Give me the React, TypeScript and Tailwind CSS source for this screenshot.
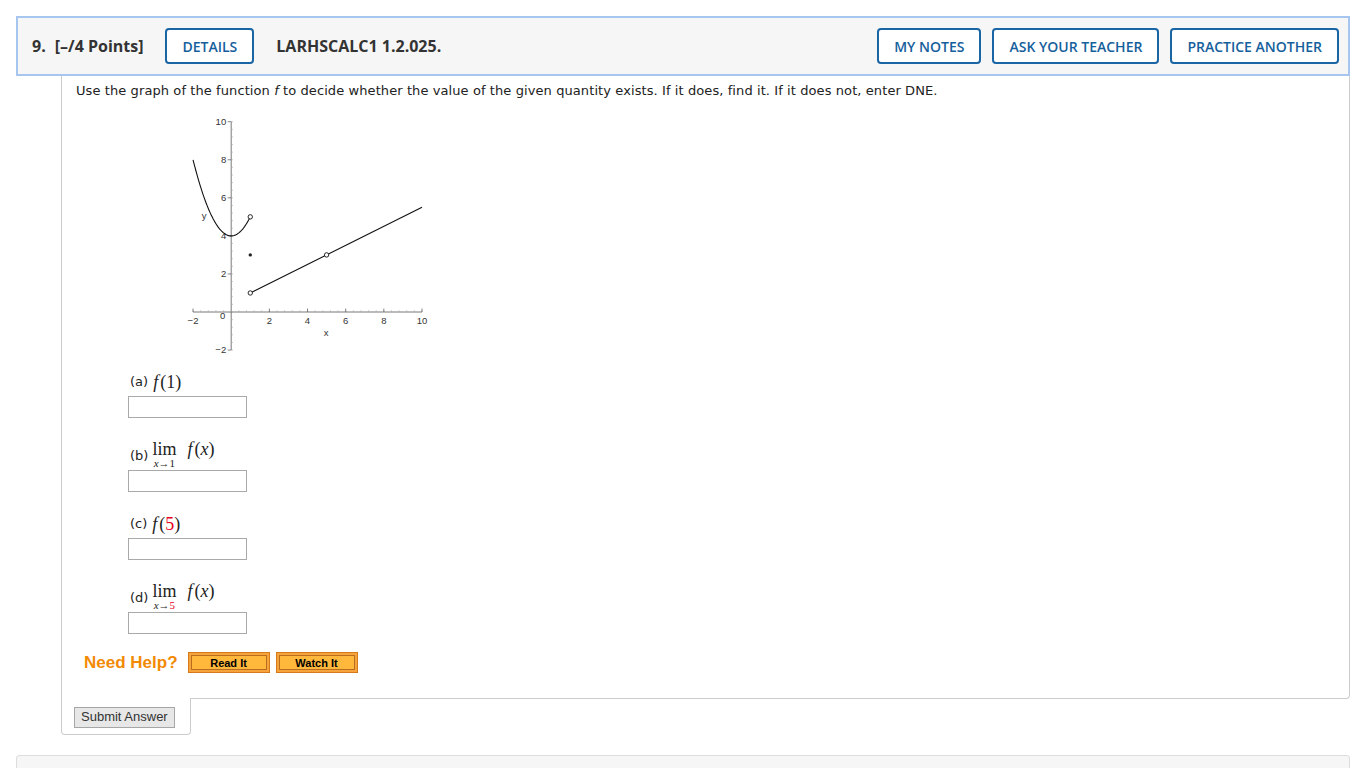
import React from "react";

/* ------------------------------------------------------------------ */
/* Graph                                                               */
/* ------------------------------------------------------------------ */

const px = (x: number) => 56.2 + 19.08 * x;
const py = (y: number) => 204 - 19.03 * y;

function parabolaPath(): string {
  const pts: string[] = [];
  for (let i = 0; i <= 60; i++) {
    const x = -2 + (3 * i) / 60;
    const y = x * x + 4;
    pts.push(`${i === 0 ? "M" : "L"}${px(x).toFixed(2)},${py(y).toFixed(2)}`);
  }
  return pts.join(" ");
}

function Graph() {
  const minor: number[] = [];
  for (let v = -2; v <= 10.001; v += 0.4) minor.push(v);
  const major = [-2, 2, 4, 6, 8, 10];

  return (
    <svg width="260" height="256" viewBox="0 0 260 256" className="block">
      {/* axes */}
      <line x1={px(-2)} y1={py(0)} x2={px(10)} y2={py(0)} stroke="#555" strokeWidth="0.8" />
      <line x1={px(0)} y1={py(-2)} x2={px(0)} y2={py(10)} stroke="#555" strokeWidth="0.8" />
      {minor.map((v, i) => (
        <line key={"mx" + i} x1={px(v)} y1={py(0)} x2={px(v)} y2={py(0) - 1.8} stroke="#aaa" strokeWidth="0.6" />
      ))}
      {minor.map((v, i) => (
        <line key={"my" + i} x1={px(0)} y1={py(v)} x2={px(0) + 1.8} y2={py(v)} stroke="#aaa" strokeWidth="0.6" />
      ))}
      {major.map((v) => (
        <line key={"Mx" + v} x1={px(v)} y1={py(0)} x2={px(v)} y2={py(0) - 3.5} stroke="#555" strokeWidth="0.7" />
      ))}
      {major.map((v) => (
        <line key={"My" + v} x1={px(0)} y1={py(v)} x2={px(0) - 3.5} y2={py(v)} stroke="#555" strokeWidth="0.7" />
      ))}

      {/* labels */}
      <g fontFamily="'Liberation Sans', Arial, sans-serif" fontSize="9.5" fill="#333">
        {major.map((v) => (
          <text key={"ly" + v} x={px(0) - 5} y={py(v) + 3} textAnchor="end">
            {v < 0 ? "\u2212" + Math.abs(v) : v}
          </text>
        ))}
        <text x={px(0) - 6} y={py(0) + 7} textAnchor="end">0</text>
        {major.map((v) => (
          <text key={"lx" + v} x={px(v)} y={py(0) + 12} textAnchor="middle">
            {v < 0 ? "\u2212" + Math.abs(v) : v}
          </text>
        ))}
        <text x="29" y="111" textAnchor="middle">y</text>
        <text x="151" y="228" textAnchor="middle">x</text>
      </g>

      {/* curves */}
      <path d={parabolaPath()} fill="none" stroke="#111" strokeWidth="1.1" />
      <line x1={px(1)} y1={py(1)} x2={px(10)} y2={py(5.5)} stroke="#111" strokeWidth="1.1" />

      {/* points */}
      <circle cx={px(1)} cy={py(5)} r="2.2" fill="#fff" stroke="#111" strokeWidth="0.9" />
      <circle cx={px(1)} cy={py(1)} r="2.2" fill="#fff" stroke="#111" strokeWidth="0.9" />
      <circle cx={px(5)} cy={py(3)} r="2.2" fill="#fff" stroke="#111" strokeWidth="0.9" />
      <circle cx={px(1)} cy={py(3)} r="1.7" fill="#222" />
    </svg>
  );
}

/* ------------------------------------------------------------------ */
/* Math labels                                                         */
/* ------------------------------------------------------------------ */

const mathFont = "font-['Liberation_Serif','DejaVu_Serif',serif]";

function FOf({ arg, red }: { arg: string; red?: boolean }) {
  return (
    <span className={`${mathFont} text-[18px] text-[#222]`}>
      <span className="italic">f</span>
      <span className="ml-[2px]">(</span>
      <span className={red ? "text-[#e8001c]" : ""}>{arg}</span>
      <span>)</span>
    </span>
  );
}

function FOfX() {
  return (
    <span className={`${mathFont} text-[18px] text-[#222]`}>
      <span className="italic">f</span>
      <span className="ml-[2px]">(</span>
      <span className="italic">x</span>
      <span>)</span>
    </span>
  );
}

function Lim({ to, red }: { to: string; red?: boolean }) {
  return (
    <span className="inline-flex flex-col items-center">
      <span className={`${mathFont} text-[18px] leading-[18px] text-[#222]`}>lim</span>
      <span className={`${mathFont} text-[11px] leading-[10px] text-[#222]`}>
        <span className="italic">x</span>→<span className={red ? "text-[#e8001c]" : ""}>{to}</span>
      </span>
    </span>
  );
}

function AnswerBox() {
  return <div className="w-[119px] h-[22px] border border-[#a9a9a9] bg-white" />;
}

/* ------------------------------------------------------------------ */
/* Header pieces                                                       */
/* ------------------------------------------------------------------ */

function HeaderButton({ children }: { children: React.ReactNode }) {
  return (
    <button className="h-[36px] px-[15px] rounded-[4px] border-2 border-[#1a65a3] bg-white text-[14px] font-semibold text-[#15609c]">
      {children}
    </button>
  );
}

function HelpButton({ children }: { children: React.ReactNode }) {
  return (
    <div className="w-[82px] h-[21px] p-[2px] bg-[#f5a33a] border border-[#d57a1c]">
      <div className="h-full border border-[#b86e1e] bg-[#ffb73c] flex items-center justify-center text-[11px] font-bold text-black font-['Liberation_Sans',Arial,sans-serif]">
        {children}
      </div>
    </div>
  );
}

/* ------------------------------------------------------------------ */
/* App                                                                 */
/* ------------------------------------------------------------------ */

export default function App() {
  return (
    <div className="min-h-[768px] bg-white pt-[16px] pl-[16px] font-['Open_Sans','Noto_Sans',sans-serif]">
      {/* Header */}
      <div className="w-[1334px] h-[60px] border-2 border-[#a6c5ef] bg-[#f6f6f6] flex items-center pl-[14px] pr-[9px]">
        <span className="text-[16px] font-bold text-[#333]">9.</span>
        <span className="ml-[9px] text-[16px] font-bold text-[#333]">[–/4 Points]</span>
        <div className="ml-[22px]">
          <HeaderButton>DETAILS</HeaderButton>
        </div>
        <span className="ml-[22px] text-[16px] font-bold text-[#333]">LARHSCALC1 1.2.025.</span>
        <div className="ml-auto flex gap-[11px]">
          <HeaderButton>MY NOTES</HeaderButton>
          <HeaderButton>ASK YOUR TEACHER</HeaderButton>
          <HeaderButton>PRACTICE ANOTHER</HeaderButton>
        </div>
      </div>

      {/* Question body */}
      <div className="ml-[45px] w-[1289px]">
        <div className="h-[623px] border-l border-r border-b border-[#cccccc] rounded-br-[4px] pl-[14px] font-['DejaVu_Sans','Verdana',sans-serif] text-[13px] text-[#222]">
          <p className="pt-[7px] leading-[16px] tracking-[0.09px]">
            Use the graph of the function <span className="italic">f</span> to decide whether the value of the given
            quantity exists. If it does, find it. If it does not, enter DNE.
          </p>

          <div className="ml-[99px] mt-[9px]">
            <Graph />
          </div>

          <div className="ml-[52px]">
            {/* (a) */}
            <div className="mt-[7px] h-[22px] flex items-center">
              <span className="ml-[2px] mr-[5px]">(a)</span>
              <FOf arg="1" />
            </div>
            <div className="mt-[3px]">
              <AnswerBox />
            </div>

            {/* (b) */}
            <div className="mt-[22px] h-[28px] flex items-start">
              <span className="ml-[2px] mr-[4px] mt-[6px]">(b)</span>
              <Lim to="1" />
              <span className="ml-[11px] leading-[18px]">
                <FOfX />
              </span>
            </div>
            <div className="mt-[2px]">
              <AnswerBox />
            </div>

            {/* (c) */}
            <div className="mt-[21px] h-[22px] flex items-center">
              <span className="ml-[2px] mr-[5px]">(c)</span>
              <FOf arg="5" red />
            </div>
            <div className="mt-[3px]">
              <AnswerBox />
            </div>

            {/* (d) */}
            <div className="mt-[22px] h-[28px] flex items-start">
              <span className="ml-[2px] mr-[4px] mt-[6px]">(d)</span>
              <Lim to="5" red />
              <span className="ml-[11px] leading-[18px]">
                <FOfX />
              </span>
            </div>
            <div className="mt-[2px]">
              <AnswerBox />
            </div>
          </div>

          {/* Need help */}
          <div className="ml-[8px] mt-[16px] flex items-center gap-[6px] font-['Liberation_Sans',Arial,sans-serif]">
            <span className="text-[17px] font-bold text-[#f28a05] mr-[4px]">Need Help?</span>
            <HelpButton>Read It</HelpButton>
            <HelpButton>Watch It</HelpButton>
          </div>
        </div>

        {/* Submit tab */}
        <div className="relative -mt-px w-[130px] h-[37px] bg-white border-l border-r border-b border-[#cccccc] rounded-b-[4px] pl-[12px] pt-[5px]">
          <button className="h-[21px] px-[6px] bg-[#e7e7e7] border border-[#a6a6a6] text-[13px] text-[#333] font-['Liberation_Sans',Arial,sans-serif] leading-[18px]">
            Submit Answer
          </button>
        </div>
      </div>

      {/* Next question */}
      <div className="mt-[20px] w-[1334px] h-[40px] border border-[#dddddd] rounded-t-[3px] bg-[#f6f6f6]" />
    </div>
  );
}
